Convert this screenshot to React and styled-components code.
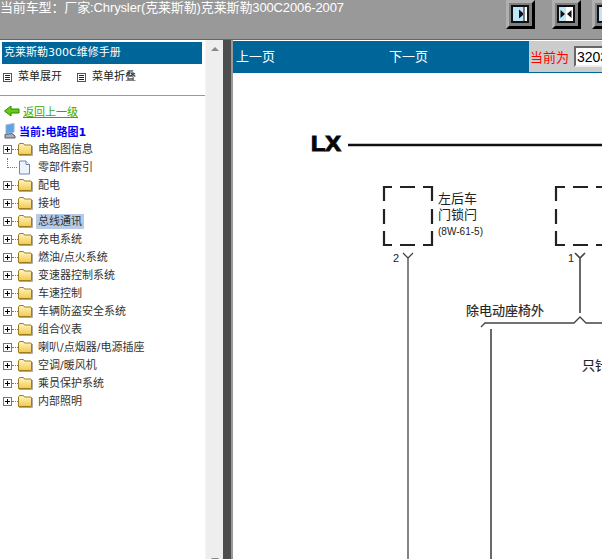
import React from "react";
import styled, { createGlobalStyle } from "styled-components";

const Global = createGlobalStyle`
  html, body { margin: 0; padding: 0; height: 100%; overflow: hidden; background: #fff; }
  #root { height: 100%; }
`;

const cjk = `"Liberation Sans", "Noto Sans CJK SC", sans-serif`;
const treeFont = `"DejaVu Sans", "Noto Sans CJK SC", sans-serif`;

const Page = styled.div`
  width: 602px;
  height: 559px;
  display: flex;
  flex-direction: column;
  overflow: hidden;
  font-family: ${cjk};
  font-size: 12px;
`;

const TopBar = styled.div`
  height: 39px;
  flex: none;
  background: #999999;
  border-bottom: 1px solid #666;
  display: flex;
  justify-content: space-between;
  overflow: hidden;
`;

const CarTitle = styled.div`
  color: #fff;
  font-size: 13px;
  line-height: 15px;
  letter-spacing: -0.13px;
  white-space: nowrap;
`;

const ToolButtons = styled.div`
  display: flex;
  width: 96px;
  flex: none;
`;

const ToolButton = styled.div`
  width: 29px;
  height: 29px;
  flex: none;
  box-sizing: border-box;
  margin-left: ${(p) => p.$gap || 0}px;
  background: #808080;
  border-style: solid;
  border-width: 3px;
  border-color: #b0b0b0 #000 #000 #b0b0b0;
  padding: 2px;
  display: flex;
`;

const Body = styled.div`
  flex: 1;
  display: flex;
  min-height: 0;
`;

const Sidebar = styled.div`
  width: 205px;
  flex: none;
  background: #fff;
  padding-top: 2px;
  box-sizing: border-box;
  font-family: ${treeFont};
  font-size: 11px;
`;

const ManualTitle = styled.div`
  margin: 0 3px 0 2px;
  height: 22px;
  background: #006699;
  color: #fff;
  line-height: 22px;
  padding-left: 2px;
`;

const MenuActions = styled.div`
  height: 32px;
  box-sizing: border-box;
  display: flex;
  align-items: flex-start;
  padding: 6px 0 0 2px;
  color: #222;
  border-bottom: 1px solid #999;
`;

const MenuAction = styled.div`
  display: flex;
  align-items: center;
  gap: 6px;
  width: 74px;
  line-height: 14px;
`;

const BackLink = styled.div`
  height: 18px;
  margin: 6px 0 0 4px;
  display: flex;
  align-items: center;
  gap: 3px;
  a {
    color: #33aa00;
    text-decoration: underline;
  }
`;

const Current = styled.div`
  height: 18px;
  margin-top: 2px;
  display: flex;
  align-items: center;
  gap: 3px;
  padding-left: 3px;
  color: #0000ff;
  font-weight: 700;
`;

const TreeRow = styled.div`
  height: 18px;
  display: flex;
  align-items: center;
  padding-left: 3px;
`;

const Connector = styled.span`
  flex: none;
  border-bottom: 1px dotted #777;
  border-left: ${(p) => (p.$leaf ? "1px dotted #777" : "none")};
  margin-left: ${(p) => (p.$leaf ? "4px" : "0")};
  width: ${(p) => (p.$leaf ? "9px" : "6px")};
  height: ${(p) => (p.$leaf ? "9px" : "0")};
  align-self: ${(p) => (p.$leaf ? "flex-start" : "center")};
  margin-right: ${(p) => (p.$leaf ? "1px" : "0")};
`;

const PlusBox = styled.span`
  width: 9px;
  height: 9px;
  flex: none;
  box-sizing: border-box;
  border: 1px solid #777;
  background: linear-gradient(#000, #000) center / 5px 1px no-repeat,
    linear-gradient(#000, #000) center / 1px 5px no-repeat, #fff;
`;

const TreeLabel = styled.span`
  margin-left: 3px;
  padding: 0 2px;
  color: #333;
  line-height: 15px;
  background: ${(p) => (p.$selected ? "#b8cbe6" : "transparent")};
`;

const ScrollBar = styled.div`
  width: 18px;
  flex: none;
  background: #eeeeee;
  border-left: 1px solid #f6f6f6;
  box-sizing: border-box;
  display: flex;
  flex-direction: column;
  align-items: center;
  justify-content: space-between;
  padding: 7px 0 0;
  overflow: hidden;
`;

const Arrow = styled.span`
  width: 0;
  height: 0;
  margin-bottom: ${(p) => (p.$down ? "-3px" : "0")};
  border-left: 4px solid transparent;
  border-right: 4px solid transparent;
  border-${(p) => (p.$down ? "top" : "bottom")}: 4px solid #888;
`;

const Splitter = styled.div`
  width: 8px;
  flex: none;
  background: #4d4d4d;
  border-right: 2px solid #999;
`;

const Content = styled.div`
  flex: 1;
  min-width: 0;
  display: flex;
  flex-direction: column;
  overflow: hidden;
`;

const NavBar = styled.div`
  height: 32px;
  flex: none;
  background: #006699;
  display: flex;
  color: #fff;
  font-size: 13px;
  margin-top: 1px;
`;

const NavLink = styled.div`
  width: ${(p) => p.$w}px;
  flex: none;
  padding-left: 3px;
  box-sizing: border-box;
  line-height: 31px;
`;

const PageBox = styled.div`
  flex: 1;
  background: #cccccc;
  display: flex;
  align-items: center;
  color: #ff0000;
  padding-left: 1px;
  height: 31px;
  white-space: nowrap;
  font-size: 13px;
`;

const PageInput = styled.input`
  width: 60px;
  height: 21px;
  flex: none;
  box-sizing: border-box;
  margin: 0 0 0 5px;
  padding: 0 1px;
  font: 14px "Liberation Sans", sans-serif;
  border-style: solid;
  border-width: 2px;
  border-color: #666 #eee #eee #666;
`;

const Diagram = styled.svg`
  flex: 1;
  display: block;
  width: 369px;
  background: #fff;
`;

const treeItems = [
  { name: "电路图信息" },
  { name: "零部件索引", leaf: true },
  { name: "配电" },
  { name: "接地" },
  { name: "总线通讯", selected: true },
  { name: "充电系统" },
  { name: "燃油/点火系统" },
  { name: "变速器控制系统" },
  { name: "车速控制" },
  { name: "车辆防盗安全系统" },
  { name: "组合仪表" },
  { name: "喇叭/点烟器/电源插座" },
  { name: "空调/暖风机" },
  { name: "乘员保护系统" },
  { name: "内部照明" },
];

const FolderIcon = () => (
  <svg width="15" height="13" viewBox="0 0 15 13" style={{ flex: "none" }}>
    <defs>
      <linearGradient id="fold" x1="0" y1="0" x2="0" y2="1">
        <stop offset="0" stopColor="#fff6c4" />
        <stop offset="1" stopColor="#f2c94e" />
      </linearGradient>
    </defs>
    <path d="M0.5 2 L1.5 0.5 H5.5 L6.5 2 H13 L13.5 2.5 V11.5 H0.5 Z" fill="url(#fold)" stroke="#a07c20" />
    <path d="M1 12.5 H14.5 V3" stroke="#aaa" fill="none" />
  </svg>
);

const DocIcon = () => (
  <svg width="13" height="15" viewBox="0 0 13 15" style={{ flex: "none", margin: "0 2px 0 0" }}>
    <path d="M1.5 1 H8 L11.5 4.5 V14 H1.5 Z" fill="#eef3fb" stroke="#6c84b8" />
    <path d="M8 1 V4.5 H11.5" fill="#fff" stroke="#6c84b8" />
  </svg>
);

const ListIcon = () => (
  <svg width="9" height="9" viewBox="0 0 9 9" style={{ flex: "none", marginLeft: 1 }}>
    <rect x="0.5" y="0.5" width="8" height="8" fill="#fff" stroke="#555" />
    <path d="M2 2.5 H7 M2 4.5 H7 M2 6.5 H7" stroke="#222" />
  </svg>
);

const BackIcon = () => (
  <svg width="16" height="12" viewBox="0 0 16 12" style={{ flex: "none" }}>
    <path d="M0.5 6 L7 1 V4 H15 V8 H7 V11 Z" fill="#66cc11" stroke="#2d8a00" />
  </svg>
);

const ComputerIcon = () => (
  <svg width="13" height="16" viewBox="0 0 13 16" style={{ flex: "none" }}>
    <path d="M3 2 L11 0.5 V9 L3 10.5 Z" fill="#5aa6ea" stroke="#9ab0cc" />
    <path d="M2 11.5 L9 10.5 L12 13 V15 H2 Z" fill="#a8aebb" stroke="#5a5f6a" />
  </svg>
);

const PanelGlyph = ({ both }) => (
  <svg width="18" height="18" viewBox="0 0 18 18" style={{ display: "block", flex: "none" }}>
    <rect x="1" y="1" width="16" height="16" fill={both ? "#fff" : "#bde6fb"} stroke="#111" strokeWidth="2" />
    {both ? (
      <>
        <rect x="2" y="2" width="7" height="14" fill="#bde6fb" />
        <path d="M3.5 5 L8 9 L3.5 13 Z M14.5 5 L10 9 L14.5 13 Z" fill="#111" />
      </>
    ) : (
      <>
        <rect x="13.5" y="2" width="2.5" height="14" fill="#fff" />
        <path d="M13 2 V16" stroke="#111" />
        <path d="M8 4.5 L12 8 V10 L8 13.5 Z" fill="#111" />
      </>
    )}
  </svg>
);

const App = () => (
  <>
    <Global />
    <Page>
      <TopBar>
        <CarTitle>当前车型：厂家:Chrysler(克莱斯勒)克莱斯勒300C2006-2007</CarTitle>
        <ToolButtons>
          <ToolButton><PanelGlyph /></ToolButton>
          <ToolButton $gap={17}><PanelGlyph both /></ToolButton>
          <ToolButton $gap={11}><PanelGlyph /></ToolButton>
        </ToolButtons>
      </TopBar>
      <Body>
        <Sidebar>
          <ManualTitle>克莱斯勒300C维修手册</ManualTitle>
          <MenuActions>
            <MenuAction><ListIcon />菜单展开</MenuAction>
            <MenuAction><ListIcon />菜单折叠</MenuAction>
          </MenuActions>
          <BackLink><BackIcon /><a>返回上一级</a></BackLink>
          <Current><ComputerIcon />当前:电路图1</Current>
          {treeItems.map((item) => (
            <TreeRow key={item.name}>
              {!item.leaf && <PlusBox />}
              <Connector $leaf={item.leaf} />
              {item.leaf ? <DocIcon /> : <FolderIcon />}
              <TreeLabel $selected={item.selected}>{item.name}</TreeLabel>
            </TreeRow>
          ))}
        </Sidebar>
        <ScrollBar>
          <Arrow />
          <Arrow $down />
        </ScrollBar>
        <Splitter />
        <Content>
          <NavBar>
            <NavLink $w={153}>上一页</NavLink>
            <NavLink $w={143}>下一页</NavLink>
            <PageBox>当前为<PageInput defaultValue="3203" readOnly /></PageBox>
          </NavBar>
          <Diagram viewBox="233 73 369 486" preserveAspectRatio="xMinYMin slice">
            <text x="311" y="151" fontFamily="Liberation Sans, sans-serif" fontWeight="700" fontSize="22" stroke="#111" strokeWidth="1.2" textLength="30" lengthAdjust="spacingAndGlyphs">LX</text>
            <path d="M348 145 H602" stroke="#111" strokeWidth="2.5" fill="none" />
            <path
              d="M384 201 V187 H392 M400 187 H415 M423 187 H432 V201 M432 209 V224 M432 231 V245 H423 M415 245 H400 M392 245 H384 V231 M384 224 V209 M556 201 V187 H565 M573 187 H588 M596 187 H602 M556 209 V224 M556 231 V245 H565 M573 245 H588 M596 245 H602"
              stroke="#222"
              strokeWidth="2.2"
              fill="none"
            />
            <g fontFamily="Liberation Sans, Noto Sans CJK SC, sans-serif" fill="#222">
              <text x="438" y="203" fontSize="13">左后车</text>
              <text x="438" y="219" fontSize="13">门锁闩</text>
              <text x="438" y="235" fontSize="11" textLength="45" lengthAdjust="spacingAndGlyphs">(8W-61-5)</text>
              <text x="393" y="262" fontSize="11">2</text>
              <text x="568" y="262" fontSize="11">1</text>
              <text x="466" y="315" fontSize="13" stroke="#222" strokeWidth="0.15">除电动座椅外</text>
              <text x="582" y="370" fontSize="13" stroke="#222" strokeWidth="0.15">只针对</text>
            </g>
            <g stroke="#444" fill="none" strokeWidth="1.3">
              <path d="M403 253 L408 258 L413 253 M408 258 V559" />
              <path d="M575 253 L580 258 L585 253 M580 258 V313" strokeWidth="1.6" />
              <path d="M481 327 L485 323 H574 L580 317 L586 323 H602" />
              <path d="M491 329 V559" strokeWidth="1.6" />
            </g>
          </Diagram>
        </Content>
      </Body>
    </Page>
  </>
);

export default App;
